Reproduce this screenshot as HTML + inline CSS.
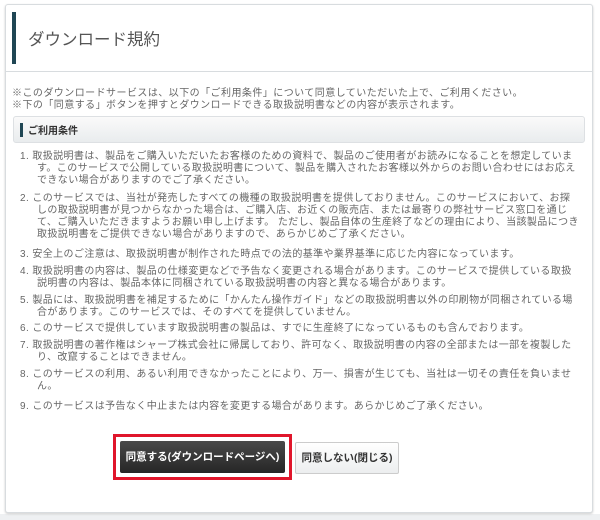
<!DOCTYPE html>
<html><head><meta charset="utf-8"><style>
body{margin:0;width:600px;height:520px;background:#fff;font-family:"Liberation Sans","Noto Sans CJK JP",sans-serif;color:#555;position:relative;overflow:hidden}
.panel{position:absolute;left:5px;top:4px;width:586px;height:507px;border:1px solid #d8dcdf;border-radius:3px;background:#fff;box-shadow:0 1px 2px #ccc}
.strip{position:absolute;left:0;top:514px;width:600px;height:6px;background:#eef0f2}
.tbar{position:absolute;left:12px;top:12px;width:4px;height:52px;background:#1f4654}
.title{position:absolute;left:28px;top:26px;font-size:16.5px;color:#555;white-space:nowrap}
.hr{position:absolute;left:6px;top:71px;width:586px;height:1px;background:#d8dcdf}
.note{position:absolute;left:12px;font-size:10px;letter-spacing:.45px;white-space:nowrap;color:#666}
.sub{position:absolute;left:13px;top:116px;width:570px;height:25px;border:1px solid #dde0e3;border-radius:3px;background:linear-gradient(#fafafa,#e9ecee)}
.sbar{position:absolute;left:6px;top:6px;width:3px;height:14px;background:#1f4654}
.stxt{position:absolute;left:14px;top:5px;font-size:10px;font-weight:bold;color:#333}
.li{position:absolute;left:20px;font-size:10px;letter-spacing:.4px;line-height:12px;white-space:nowrap;color:#666}
.li span{display:block;padding-left:17px}
.li span.f{padding-left:0}
.red{position:absolute;left:113px;top:434px;width:173px;height:40px;border:3px solid #e0162b}
.b1{position:absolute;left:120px;top:441px;width:165px;height:32px;background:linear-gradient(#4a4a4a,#262626);border-radius:2px;color:#fff;font-size:10.5px;font-weight:bold;text-align:center;line-height:32px;white-space:nowrap}
.b2{position:absolute;left:295px;top:442px;width:102px;height:30px;border:1px solid #ccc;border-radius:2px;background:linear-gradient(#fff,#eceeef);color:#333;font-size:10.5px;font-weight:bold;text-align:center;line-height:30px;white-space:nowrap}
</style></head><body>
<div class="strip"></div>
<div class="panel"></div>
<div class="tbar"></div>
<div class="title">ダウンロード規約</div>
<div class="hr"></div>
<div class="note" style="top:84px">※このダウンロードサービスは、以下の「ご利用条件」について同意していただいた上で、ご利用ください。</div>
<div class="note" style="top:96px">※下の「同意する」ボタンを押すとダウンロードできる取扱説明書などの内容が表示されます。</div>
<div class="sub"><div class="sbar"></div><div class="stxt">ご利用条件</div></div>
<div class="li" style="top:151px"><span class="f">1. 取扱説明書は、製品をご購入いただいたお客様のための資料で、製品のご使用者がお読みになることを想定していま</span><span>す。このサービスで公開している取扱説明書について、製品を購入されたお客様以外からのお問い合わせにはお応え</span><span>できない場合がありますのでご了承ください。</span></div>
<div class="li" style="top:193px"><span class="f">2. このサービスでは、当社が発売したすべての機種の取扱説明書を提供しておりません。このサービスにおいて、お探</span><span>しの取扱説明書が見つからなかった場合は、ご購入店、お近くの販売店、または最寄りの弊社サービス窓口を通じ</span><span>て、ご購入いただきますようお願い申し上げます。 ただし、製品自体の生産終了などの理由により、当該製品につき</span><span>取扱説明書をご提供できない場合がありますので、あらかじめご了承ください。</span></div>
<div class="li" style="top:249px"><span class="f">3. 安全上のご注意は、取扱説明書が制作された時点での法的基準や業界基準に応じた内容になっています。</span></div>
<div class="li" style="top:266px"><span class="f">4. 取扱説明書の内容は、製品の仕様変更などで予告なく変更される場合があります。このサービスで提供している取扱</span><span>説明書の内容は、製品本体に同梱されている取扱説明書の内容と異なる場合があります。</span></div>
<div class="li" style="top:295px"><span class="f">5. 製品には、取扱説明書を補足するために「かんたん操作ガイド」などの取扱説明書以外の印刷物が同梱されている場</span><span>合があります。このサービスでは、そのすべてを提供していません。</span></div>
<div class="li" style="top:323px"><span class="f">6. このサービスで提供しています取扱説明書の製品は、すでに生産終了になっているものも含んでおります。</span></div>
<div class="li" style="top:340px"><span class="f">7. 取扱説明書の著作権はシャープ株式会社に帰属しており、許可なく、取扱説明書の内容の全部または一部を複製した</span><span>り、改竄することはできません。</span></div>
<div class="li" style="top:369px"><span class="f">8. このサービスの利用、あるい利用できなかったことにより、万一、損害が生じても、当社は一切その責任を負いませ</span><span>ん。</span></div>
<div class="li" style="top:401px"><span class="f">9. このサービスは予告なく中止または内容を変更する場合があります。あらかじめご了承ください。</span></div>
<div class="red"></div>
<div class="b1">同意する(ダウンロードページへ)</div>
<div class="b2">同意しない(閉じる)</div>
</body></html>
